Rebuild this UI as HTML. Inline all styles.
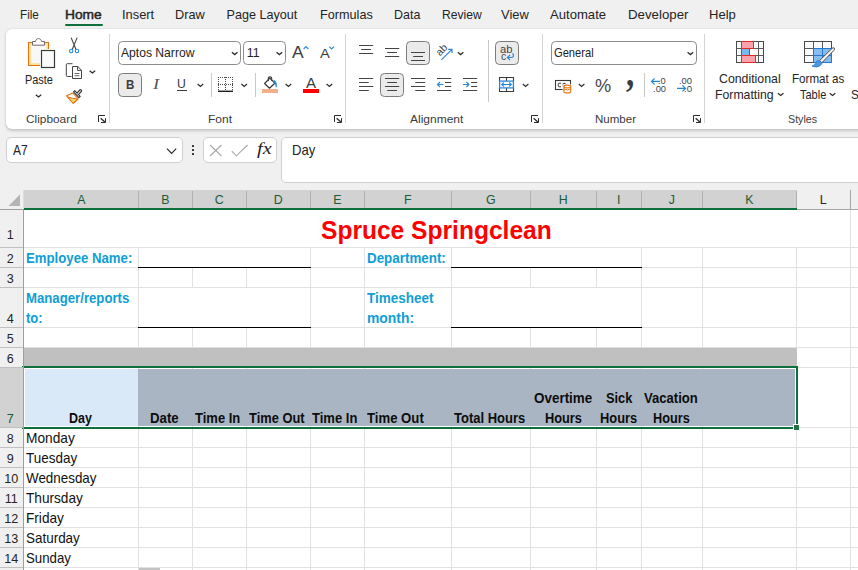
<!DOCTYPE html>
<html lang="en">
<head>
<meta charset="utf-8">
<title>Spruce Springclean - Excel</title>
<style>
*{box-sizing:border-box;margin:0;padding:0}
html,body{width:858px;height:570px;overflow:hidden;background:#f0f0f0}
body{position:relative;font-family:"Liberation Sans",sans-serif;color:#242424;font-size:13px}
.abs,.t{position:absolute;white-space:nowrap}
.t{line-height:1}
svg{position:absolute;overflow:visible}
</style>
</head>
<body>
<!-- ================= TABS ================= -->
<span class="t" style="left:19.90px;top:9.00px;font-size:12.6px;transform:scaleX(0.9267);transform-origin:0 0;">File</span>
<span class="t" style="left:64.90px;top:9.00px;font-size:12.6px;transform:scaleX(1.0939);transform-origin:0 0;-webkit-text-stroke:0.45px #242424;">Home</span>
<span class="t" style="left:121.50px;top:9.00px;font-size:12.6px;transform:scaleX(1.0222);transform-origin:0 0;">Insert</span>
<span class="t" style="left:174.90px;top:9.00px;font-size:12.6px;transform:scaleX(1.0129);transform-origin:0 0;">Draw</span>
<span class="t" style="left:226.50px;top:9.00px;font-size:12.6px;">Page Layout</span>
<span class="t" style="left:319.90px;top:9.00px;font-size:12.6px;transform:scaleX(1.0049);transform-origin:0 0;">Formulas</span>
<span class="t" style="left:393.90px;top:9.00px;font-size:12.6px;transform:scaleX(0.9907);transform-origin:0 0;">Data</span>
<span class="t" style="left:441.90px;top:9.00px;font-size:12.6px;transform:scaleX(0.9630);transform-origin:0 0;">Review</span>
<span class="t" style="left:501.20px;top:9.00px;font-size:12.6px;transform:scaleX(1.0262);transform-origin:0 0;">View</span>
<span class="t" style="left:550.20px;top:9.00px;font-size:12.6px;transform:scaleX(1.0403);transform-origin:0 0;">Automate</span>
<span class="t" style="left:628.20px;top:9.00px;font-size:12.6px;transform:scaleX(1.0530);transform-origin:0 0;">Developer</span>
<span class="t" style="left:708.50px;top:9.00px;font-size:12.6px;transform:scaleX(1.0350);transform-origin:0 0;">Help</span>
<div class="abs" style="left:65px;top:24px;width:38px;height:2px;background:#0f703b;border-radius:1px;"></div>
<!-- ================= RIBBON ================= -->
<div class="abs" style="left:6px;top:29px;width:880px;height:100px;background:#fff;border-radius:6px;box-shadow:0 1.5px 3px rgba(0,0,0,.17),0 0 1.5px rgba(0,0,0,.10);"></div>
<div class="abs" style="left:109px;top:34px;width:1px;height:89px;background:#d4d4d4;"></div>
<div class="abs" style="left:345px;top:34px;width:1px;height:89px;background:#d4d4d4;"></div>
<div class="abs" style="left:542px;top:34px;width:1px;height:89px;background:#d4d4d4;"></div>
<div class="abs" style="left:704px;top:34px;width:1px;height:89px;background:#d4d4d4;"></div>
<div class="abs" style="left:211px;top:73px;width:1px;height:24px;background:#c9c9c9;"></div>
<div class="abs" style="left:255px;top:73px;width:1px;height:24px;background:#c9c9c9;"></div>
<div class="abs" style="left:488px;top:40px;width:1px;height:62px;background:#c9c9c9;"></div>
<div class="abs" style="left:644px;top:73px;width:1px;height:24px;background:#c9c9c9;"></div>
<span class="t" style="left:25.80px;top:114.00px;font-size:11.2px;color:#3b3b3b;transform:scaleX(1.0597);transform-origin:0 0;">Clipboard</span>
<span class="t" style="left:207.70px;top:114.00px;font-size:11.2px;color:#3b3b3b;transform:scaleX(1.0714);transform-origin:0 0;">Font</span>
<span class="t" style="left:409.50px;top:114.00px;font-size:11.2px;color:#3b3b3b;transform:scaleX(1.0726);transform-origin:0 0;">Alignment</span>
<span class="t" style="left:595.00px;top:114.00px;font-size:11.2px;color:#3b3b3b;transform:scaleX(1.0297);transform-origin:0 0;">Number</span>
<span class="t" style="left:788.40px;top:114.00px;font-size:11.2px;color:#3b3b3b;transform:scaleX(0.9567);transform-origin:0 0;">Styles</span>
<svg style="left:0;top:0" width="858" height="140"><path d="M98.5 122V115.5H105" fill="none" stroke="#2a2a2a" stroke-width="1"/><path d="M100.6 118.3L105.2 122.2" fill="none" stroke="#2a2a2a" stroke-width="1.3"/><path d="M105.5 118.2V122.5H101" fill="none" stroke="#2a2a2a" stroke-width="1"/></svg>
<svg style="left:0;top:0" width="858" height="140"><path d="M334.5 122V115.5H341" fill="none" stroke="#2a2a2a" stroke-width="1"/><path d="M336.6 118.3L341.2 122.2" fill="none" stroke="#2a2a2a" stroke-width="1.3"/><path d="M341.5 118.2V122.5H337" fill="none" stroke="#2a2a2a" stroke-width="1"/></svg>
<svg style="left:0;top:0" width="858" height="140"><path d="M531.5 122V115.5H538" fill="none" stroke="#2a2a2a" stroke-width="1"/><path d="M533.6 118.3L538.2 122.2" fill="none" stroke="#2a2a2a" stroke-width="1.3"/><path d="M538.5 118.2V122.5H534" fill="none" stroke="#2a2a2a" stroke-width="1"/></svg>
<svg style="left:0;top:0" width="858" height="140"><path d="M693.5 122V115.5H700" fill="none" stroke="#2a2a2a" stroke-width="1"/><path d="M695.6 118.3L700.2 122.2" fill="none" stroke="#2a2a2a" stroke-width="1.3"/><path d="M700.5 118.2V122.5H696" fill="none" stroke="#2a2a2a" stroke-width="1"/></svg>
<svg style="left:0;top:0" width="858" height="140"><rect x="28.5" y="42.5" width="20" height="23" fill="#fbe19a" stroke="#e2730f" stroke-width="1"/><rect x="31.3" y="44.8" width="15" height="18.4" fill="#f8f8f8"/><path d="M32.5 45.2V41.5H35.4C35.8 39.7 37 38.6 38.5 38.6C40 38.6 41.2 39.7 41.6 41.5H44.5V45.2Z" fill="#fff" stroke="#6a6a6a" stroke-width="1"/><rect x="40" y="49" width="16" height="20" fill="#fff"/><rect x="41.5" y="50.5" width="13" height="17" fill="#fafafa" stroke="#3a3a3a" stroke-width="1.2"/></svg>
<span class="t" style="left:25.10px;top:74.00px;font-size:12.4px;transform:scaleX(0.8806);transform-origin:0 0;">Paste</span>
<svg style="left:0;top:0" width="858" height="140"><path d="M35.8 94.7L38.5 96.9L41.2 94.7" fill="none" stroke="#2b2b2b" stroke-width="1.25" stroke-linejoin="miter"/></svg>
<svg style="left:0;top:0" width="858" height="140"><path d="M71.1 37.6L76.1 49.7M77.1 37.6L72.1 49.7" fill="none" stroke="#444" stroke-width="1.1"/><circle cx="71.2" cy="51" r="1.7" fill="#fff" stroke="#2b88d8" stroke-width="1.1"/><circle cx="77" cy="51" r="1.7" fill="#fff" stroke="#2b88d8" stroke-width="1.1"/></svg>
<svg style="left:0;top:0" width="858" height="140"><path d="M71.5 76.5H67.3Q66.3 76.5 66.3 75.5V64.7Q66.3 63.7 67.3 63.7H72.5" fill="none" stroke="#444" stroke-width="1"/><path d="M72.5 66.5H77.8L81.5 70.2V78.5H72.5Z" fill="#fff" stroke="#444" stroke-width="1"/><path d="M77.6 66.7V70.4H81.3" fill="none" stroke="#444" stroke-width="1"/><path d="M74.6 73.5H79.4M74.6 75.7H79.4" fill="none" stroke="#555" stroke-width="0.9"/></svg>
<svg style="left:0;top:0" width="858" height="140"><path d="M89.6 70.7L92.4 73.0L95.2 70.7" fill="none" stroke="#2b2b2b" stroke-width="1.25" stroke-linejoin="miter"/></svg>
<svg style="left:0;top:0" width="858" height="140"><path d="M72.8 93L66.6 95.8L73.2 103.5L78.2 98.8Z" fill="#fff" stroke="#e2730f" stroke-width="1.1" stroke-linejoin="round"/><path d="M67.6 96.8Q72.6 98.8 77.6 98.9L73.2 103.2Z" fill="#fbd56e" stroke="#e2730f" stroke-width="1" stroke-linejoin="round"/><path d="M73.5 91.9L74.7 90.7L80.2 96.4L79 97.6Z" fill="#fff" stroke="#333" stroke-width="1.1" stroke-linejoin="round"/><path d="M76.9 93.1L79.8 90Q80.5 89.3 81.3 90Q82 90.8 81.3 91.5L78.4 94.6" fill="#fff" stroke="#333" stroke-width="1.1" stroke-linejoin="round"/></svg>
<div class="abs" style="left:118px;top:41px;width:123px;height:24px;background:#fff;border:1px solid #8c8c8c;border-radius:4.5px;"></div>
<span class="t" style="left:120.50px;top:47.00px;font-size:12.4px;transform:scaleX(0.9781);transform-origin:0 0;">Aptos Narrow</span>
<svg style="left:0;top:0" width="858" height="140"><path d="M231.9 52.3L234.7 54.6L237.5 52.3" fill="none" stroke="#2b2b2b" stroke-width="1.25" stroke-linejoin="miter"/></svg>
<div class="abs" style="left:243px;top:41px;width:43px;height:24px;background:#fff;border:1px solid #8c8c8c;border-radius:4.5px;"></div>
<span class="t" style="left:246.70px;top:47.00px;font-size:12.4px;">11</span>
<svg style="left:0;top:0" width="858" height="140"><path d="M276.6 52.3L279.4 54.6L282.2 52.3" fill="none" stroke="#2b2b2b" stroke-width="1.25" stroke-linejoin="miter"/></svg>
<span class="t" style="left:292.40px;top:45.00px;font-size:16px;color:#3b3b3b;transform:scaleX(1.0914);transform-origin:0 0;">A</span>
<svg style="left:0;top:0" width="858" height="140"><path d="M303.6 49.0L306.0 46.6L308.4 49.0" fill="none" stroke="#2b88d8" stroke-width="1.2" stroke-linejoin="miter"/></svg>
<span class="t" style="left:320.00px;top:48.00px;font-size:12.6px;color:#3b3b3b;transform:scaleX(1.1727);transform-origin:0 0;">A</span>
<svg style="left:0;top:0" width="858" height="140"><path d="M329.3 46.6L331.6 49.0L334.0 46.6" fill="none" stroke="#2b88d8" stroke-width="1.2" stroke-linejoin="miter"/></svg>
<div class="abs" style="left:118px;top:73px;width:24px;height:24px;background:#ebebeb;border:1px solid #7c7c7c;border-radius:4.5px;"></div>
<span class="t" style="left:125.60px;top:78.00px;font-size:13px;font-weight:700;color:#3b3b3b;transform:scaleX(0.8868);transform-origin:0 0;">B</span>
<span class="t" style="left:152.69px;top:78.00px;font-size:14px;font-style:italic;color:#555;transform:scaleX(1.3158);transform-origin:0 0;font-family:'Liberation Serif',serif;">I</span>
<span class="t" style="left:176.80px;top:78.00px;font-size:12.6px;color:#3b3b3b;transform:scaleX(0.9700);transform-origin:0 0;">U</span>
<div class="abs" style="left:177px;top:89.6px;width:9.5px;height:1px;background:#3b3b3b;"></div>
<svg style="left:0;top:0" width="858" height="140"><path d="M197.6 84.1L200.4 86.4L203.2 84.1" fill="none" stroke="#2b2b2b" stroke-width="1.25" stroke-linejoin="miter"/></svg>
<svg style="left:0;top:0" width="858" height="140"><path d="M218 77h1v1h-1zM220 77h1v1h-1zM222 77h1v1h-1zM224 77h1v1h-1zM226 77h1v1h-1zM228 77h1v1h-1zM230 77h1v1h-1zM232 77h1v1h-1zM218 84h1v1h-1zM220 84h1v1h-1zM222 84h1v1h-1zM224 84h1v1h-1zM226 84h1v1h-1zM228 84h1v1h-1zM230 84h1v1h-1zM232 84h1v1h-1zM218 77h1v1h-1zM218 79h1v1h-1zM218 81h1v1h-1zM218 83h1v1h-1zM218 85h1v1h-1zM218 87h1v1h-1zM218 89h1v1h-1zM225 77h1v1h-1zM225 79h1v1h-1zM225 81h1v1h-1zM225 83h1v1h-1zM225 85h1v1h-1zM225 87h1v1h-1zM225 89h1v1h-1zM232 77h1v1h-1zM232 79h1v1h-1zM232 81h1v1h-1zM232 83h1v1h-1zM232 85h1v1h-1zM232 87h1v1h-1zM232 89h1v1h-1z" fill="#4a4a4a" shape-rendering="crispEdges"/><rect x="218" y="90.6" width="15" height="1.4" fill="#1f1f1f"/></svg>
<svg style="left:0;top:0" width="858" height="140"><path d="M241.4 84.1L244.2 86.4L247.0 84.1" fill="none" stroke="#2b2b2b" stroke-width="1.25" stroke-linejoin="miter"/></svg>
<svg style="left:0;top:0" width="858" height="140"><path d="M264.6 83.5L269.8 78.2L274.8 83.2L269.5 88.2Z" fill="#fff" stroke="#3a3a3a" stroke-width="1.2" stroke-linejoin="round"/><path d="M268.3 81.2V78.5Q268.3 76.9 270 76.9Q271.7 76.9 271.7 78.5V80.8" fill="none" stroke="#3a3a3a" stroke-width="1.1"/><path d="M273.8 80.3Q277.6 82 276.2 87.2Q275.8 83.8 273.4 81.8Z" fill="#2b88d8" stroke="#2b88d8" stroke-width="0.6"/><rect x="262" y="89" width="16" height="4" fill="#f2b08a"/></svg>
<svg style="left:0;top:0" width="858" height="140"><path d="M285.6 84.1L288.4 86.4L291.2 84.1" fill="none" stroke="#2b2b2b" stroke-width="1.25" stroke-linejoin="miter"/></svg>
<span class="t" style="left:305.90px;top:75.00px;font-size:15.2px;color:#3b3b3b;transform:scaleX(0.9918);transform-origin:0 0;">A</span>
<div class="abs" style="left:303px;top:89px;width:16px;height:4px;background:#ff0000;"></div>
<svg style="left:0;top:0" width="858" height="140"><path d="M326.6 84.1L329.4 86.4L332.2 84.1" fill="none" stroke="#2b2b2b" stroke-width="1.25" stroke-linejoin="miter"/></svg>
<svg style="left:0;top:0" width="858" height="140"><path d="M359.0 45.5H373.2M361.2 49.5H371.0M359.0 53.5H373.2" fill="none" stroke="#444" stroke-width="1.1"/></svg>
<svg style="left:0;top:0" width="858" height="140"><path d="M385.0 48.5H399.2M387.2 52.5H397.0M385.0 56.5H399.2" fill="none" stroke="#444" stroke-width="1.1"/></svg>
<div class="abs" style="left:406px;top:41px;width:24px;height:24px;background:#ebebeb;border:1px solid #7c7c7c;border-radius:4.5px;"></div>
<svg style="left:0;top:0" width="858" height="140"><path d="M411.0 52.5H425.0M413.2 56.5H423.0M411.0 60.5H425.0" fill="none" stroke="#444" stroke-width="1.1"/></svg>
<span class="t" style="left:440.6px;top:47.2px;font-size:10.5px;color:#444;transform:rotate(-45deg);transform-origin:0 100%;">ab</span>
<svg style="left:0;top:0" width="858" height="140"><path d="M441.4 59.8L451.6 49.6M448.2 49.3H452V53.1" fill="none" stroke="#2b88d8" stroke-width="1.2"/></svg>
<svg style="left:0;top:0" width="858" height="140"><path d="M457.8 52.3L460.6 54.6L463.4 52.3" fill="none" stroke="#2b2b2b" stroke-width="1.25" stroke-linejoin="miter"/></svg>
<svg style="left:0;top:0" width="858" height="140"><path d="M359.0 78.5H373.2M359.0 82.5H368.8M359.0 86.5H373.2M359.0 90.5H368.8" fill="none" stroke="#444" stroke-width="1.1"/></svg>
<div class="abs" style="left:380px;top:73px;width:24px;height:24px;background:#ebebeb;border:1px solid #7c7c7c;border-radius:4.5px;"></div>
<svg style="left:0;top:0" width="858" height="140"><path d="M385.0 78.5H399.2M387.2 82.5H397.0M385.0 86.5H399.2M387.2 90.5H397.0" fill="none" stroke="#444" stroke-width="1.1"/></svg>
<svg style="left:0;top:0" width="858" height="140"><path d="M411.0 78.5H425.2M415.3 82.5H425.2M411.0 86.5H425.2M415.3 90.5H425.2" fill="none" stroke="#444" stroke-width="1.1"/></svg>
<svg style="left:0;top:0" width="858" height="140"><path d="M437.0 78.5H451.2M445.0 82.5H451.2M445.0 86.5H451.2M437.0 90.5H451.2" fill="none" stroke="#444" stroke-width="1.1"/></svg>
<svg style="left:0;top:0" width="858" height="140"><path d="M437.6 84.5H443.4M440 82L437.5 84.5L440 87" fill="none" stroke="#2b88d8" stroke-width="1.2"/></svg>
<svg style="left:0;top:0" width="858" height="140"><path d="M463.0 78.5H477.2M471.0 82.5H477.2M471.0 86.5H477.2M463.0 90.5H477.2" fill="none" stroke="#444" stroke-width="1.1"/></svg>
<svg style="left:0;top:0" width="858" height="140"><path d="M463 84.5H468.8M466.4 82L468.9 84.5L466.4 87" fill="none" stroke="#2b88d8" stroke-width="1.2"/></svg>
<div class="abs" style="left:495px;top:41px;width:24px;height:24px;background:#ebebeb;border:1px solid #7c7c7c;border-radius:4.5px;"></div>
<span class="t" style="left:500.40px;top:45.00px;font-size:10.2px;color:#444;transform:scaleX(1.0952);transform-origin:0 0;">ab</span>
<span class="t" style="left:500.60px;top:52.00px;font-size:10.2px;color:#444;transform:scaleX(1.0196);transform-origin:0 0;">c</span>
<svg style="left:0;top:0" width="858" height="140"><path d="M512.6 53.2Q515 57.6 510.6 57.5H507.6M510 55L507.4 57.5L510 60" fill="none" stroke="#2b88d8" stroke-width="1.2"/></svg>
<svg style="left:0;top:0" width="858" height="140"><path d="M499.5 81V77.5H513.5V81M506.5 77.5V81M499.5 88V91.5H513.5V88M506.5 88V91.5" fill="none" stroke="#3a3a3a" stroke-width="1.1"/><rect x="499.6" y="81.1" width="13.8" height="6.8" fill="#fff" stroke="#2b88d8" stroke-width="1.3"/><path d="M501.8 84.5H511.2M503.8 82.5L501.7 84.5L503.8 86.5M509.2 82.5L511.3 84.5L509.2 86.5" fill="none" stroke="#2b88d8" stroke-width="1.1"/></svg>
<svg style="left:0;top:0" width="858" height="140"><path d="M522.8 84.1L525.6 86.4L528.4 84.1" fill="none" stroke="#2b2b2b" stroke-width="1.25" stroke-linejoin="miter"/></svg>
<div class="abs" style="left:551px;top:41px;width:146px;height:24px;background:#fff;border:1px solid #8c8c8c;border-radius:4.5px;"></div>
<span class="t" style="left:554.00px;top:47.00px;font-size:12.4px;transform:scaleX(0.8993);transform-origin:0 0;">General</span>
<svg style="left:0;top:0" width="858" height="140"><path d="M687.6 52.3L690.4 54.6L693.2 52.3" fill="none" stroke="#2b2b2b" stroke-width="1.25" stroke-linejoin="miter"/></svg>
<svg style="left:0;top:0" width="858" height="140"><rect x="555.5" y="80.5" width="15" height="9" fill="#fff" stroke="#3a3a3a" stroke-width="1.1"/><path d="M561 83.2Q558 82.4 558 85Q558 87.6 561 86.8M563.2 87V83.4Q565.6 82.6 565.8 84.6" fill="none" stroke="#3a3a3a" stroke-width="1"/><rect x="562.6" y="84.4" width="9.4" height="9.4" fill="#fff"/><path d="M563.9 86.5V91.4Q563.9 92.9 567.3 92.9Q570.7 92.9 570.7 91.4V86.5" fill="#fff" stroke="#e2730f" stroke-width="1.1"/><ellipse cx="567.3" cy="86.5" rx="3.4" ry="1.4" fill="#fff" stroke="#e2730f" stroke-width="1.1"/><path d="M563.9 89Q567.3 90.8 570.7 89" fill="none" stroke="#e2730f" stroke-width="1"/></svg>
<svg style="left:0;top:0" width="858" height="140"><path d="M578.8 84.1L581.6 86.4L584.4 84.1" fill="none" stroke="#2b2b2b" stroke-width="1.25" stroke-linejoin="miter"/></svg>
<span class="t" style="left:595.40px;top:78.00px;font-size:17.8px;color:#484848;transform:scaleX(1.0226);transform-origin:0 0;">%</span>
<span class="t" style="left:626.00px;top:53.00px;font-size:40px;font-weight:700;color:#3b3b3b;transform:scaleX(0.8200);transform-origin:0 0;font-family:'Liberation Serif',serif;">,</span>
<svg style="left:0;top:0" width="858" height="140"><path d="M651.6 81.4H660M654.6 78.4L651.5 81.4L654.6 84.4" fill="none" stroke="#2287d6" stroke-width="1.25"/></svg>
<span class="t" style="left:658.20px;top:77.00px;font-size:9.3px;color:#444;transform:scaleX(1.0044);transform-origin:0 0;">.0</span>
<span class="t" style="left:653.10px;top:85.00px;font-size:9.3px;color:#444;">.00</span>
<span class="t" style="left:679.10px;top:77.00px;font-size:9.3px;color:#444;transform:scaleX(1.0056);transform-origin:0 0;">.00</span>
<svg style="left:0;top:0" width="858" height="140"><path d="M677 88.4H685.4M682.4 85.4L685.5 88.4L682.4 91.4" fill="none" stroke="#2287d6" stroke-width="1.25"/></svg>
<span class="t" style="left:684.00px;top:85.00px;font-size:9.3px;color:#444;transform:scaleX(1.0431);transform-origin:0 0;">.0</span>
<svg style="left:0;top:0" width="858" height="140"><rect x="736.5" y="41.5" width="27" height="21" fill="#fafafa" stroke="#4a4a4a" stroke-width="1"/><path d="M736.5 48.5H763.5M736.5 55.5H763.5M758.5 41.5V62.5" fill="none" stroke="#5a5a5a" stroke-width="1"/><rect x="741.5" y="41.5" width="12" height="7" fill="#f8a3ab" stroke="#e02b2b" stroke-width="1"/><rect x="742" y="49" width="7" height="6" fill="#7ab7ea"/><path d="M749.5 48.5V55.5" fill="none" stroke="#1a6fc4" stroke-width="1"/><rect x="741.5" y="55.5" width="14" height="7" fill="#f8a3ab" stroke="#e02b2b" stroke-width="1"/><path d="M741.5 41.5V62.5" fill="none" stroke="#e02b2b" stroke-width="1"/></svg>
<span class="t" style="left:718.80px;top:73.00px;font-size:12.4px;transform:scaleX(0.9942);transform-origin:0 0;">Conditional</span>
<span class="t" style="left:714.80px;top:89.00px;font-size:12.4px;transform:scaleX(0.9887);transform-origin:0 0;">Formatting</span>
<svg style="left:0;top:0" width="858" height="140"><path d="M777.9 93.2L780.7 95.5L783.5 93.2" fill="none" stroke="#2b2b2b" stroke-width="1.25" stroke-linejoin="miter"/></svg>
<svg style="left:0;top:0" width="858" height="140"><rect x="804.5" y="41.5" width="27" height="21" fill="#fafafa" stroke="#4a4a4a" stroke-width="1"/><rect x="813.5" y="48.5" width="18.5" height="14.5" fill="#86bcee"/><path d="M804.5 48.5H813.5M804.5 55.5H813.5M813.5 41.5V48.5M822.5 41.5V48.5M813.5 48.5H831.5" fill="none" stroke="#5a5a5a" stroke-width="1"/><path d="M813.5 48.5V62.5M822.5 48.5V62.5M813.5 55.5H831.5M813.5 48.5H831.5M831.5 48.5V62.5M813.5 62.5H831.5" fill="none" stroke="#2477d0" stroke-width="1"/><path d="M819.6 60.6L832 48.4Q833.4 47.2 834.3 48.1Q835.1 49.1 833.9 50.4L821.8 62.8Z" fill="#f4f4f4" stroke="#4a4a4a" stroke-width="1"/><path d="M819.4 60.4Q816.2 60.4 815.4 63.4Q814.6 65.6 812 66Q816.6 68.2 820 65.8Q822.2 64 822 62.8Z" fill="#4c97e0" stroke="#2477d0" stroke-width="0.8"/></svg>
<span class="t" style="left:791.80px;top:73.00px;font-size:12.4px;transform:scaleX(0.9355);transform-origin:0 0;">Format as</span>
<span class="t" style="left:799.70px;top:89.00px;font-size:12.4px;transform:scaleX(0.8874);transform-origin:0 0;">Table</span>
<svg style="left:0;top:0" width="858" height="140"><path d="M829.7 93.2L832.5 95.5L835.3 93.2" fill="none" stroke="#2b2b2b" stroke-width="1.25" stroke-linejoin="miter"/></svg>
<span class="t" style="left:850.60px;top:89.00px;font-size:12.4px;transform:scaleX(0.9441);transform-origin:0 0;">Styles</span>
<!-- ================= FORMULA BAR ================= -->
<div class="abs" style="left:6px;top:137px;width:177px;height:26px;background:#fff;border:1px solid #cfcfcf;border-radius:5px;"></div>
<span class="t" style="left:12.80px;top:143.00px;font-size:14.2px;transform:scaleX(0.8508);transform-origin:0 0;">A7</span>
<svg style="left:166px;top:147px" width="12" height="8"><path d="M1 1.6L5.6 6.3L10.2 1.6" fill="none" stroke="#2b2b2b" stroke-width="1.2"/></svg>
<div class="abs" style="left:192px;top:144.6px;width:2.4px;height:2.4px;background:#2a2a2a;border-radius:0.6px;"></div>
<div class="abs" style="left:192px;top:148.5px;width:2.4px;height:2.4px;background:#2a2a2a;border-radius:0.6px;"></div>
<div class="abs" style="left:192px;top:152.5px;width:2.4px;height:2.4px;background:#2a2a2a;border-radius:0.6px;"></div>
<div class="abs" style="left:203px;top:137px;width:74px;height:26px;background:#fff;border:1px solid #cfcfcf;border-radius:5px;"></div>
<svg style="left:209px;top:144px" width="40" height="13"><path d="M1 1L12.4 12M12.4 1L1 12" fill="none" stroke="#a8a8a8" stroke-width="1.1"/><path d="M22.8 7.2L27.3 11.8L38.6 1" fill="none" stroke="#a8a8a8" stroke-width="1.1"/></svg>
<span class="t" style="left:256.60px;top:140.00px;font-size:17px;font-style:italic;color:#222;transform:scaleX(1.1928);transform-origin:0 0;font-family:'Liberation Serif',serif;">fx</span>
<div class="abs" style="left:281px;top:137px;width:600px;height:46px;background:#fff;border:1px solid #cfcfcf;border-radius:5px;"></div>
<span class="t" style="left:291.80px;top:143.00px;font-size:14.2px;transform:scaleX(0.9258);transform-origin:0 0;">Day</span>
<!-- ================= GRID ================= -->
<div class="abs" style="left:24px;top:210px;width:834px;height:360px;background:#fff;"></div>
<div class="abs" style="left:24px;top:247px;width:834px;height:1px;background:#e1e1e1;"></div>
<div class="abs" style="left:24px;top:267px;width:834px;height:1px;background:#e1e1e1;"></div>
<div class="abs" style="left:24px;top:287px;width:834px;height:1px;background:#e1e1e1;"></div>
<div class="abs" style="left:24px;top:327px;width:834px;height:1px;background:#e1e1e1;"></div>
<div class="abs" style="left:24px;top:347px;width:834px;height:1px;background:#e1e1e1;"></div>
<div class="abs" style="left:24px;top:367px;width:834px;height:1px;background:#e1e1e1;"></div>
<div class="abs" style="left:24px;top:427px;width:834px;height:1px;background:#e1e1e1;"></div>
<div class="abs" style="left:24px;top:447px;width:834px;height:1px;background:#e1e1e1;"></div>
<div class="abs" style="left:24px;top:467px;width:834px;height:1px;background:#e1e1e1;"></div>
<div class="abs" style="left:24px;top:487px;width:834px;height:1px;background:#e1e1e1;"></div>
<div class="abs" style="left:24px;top:507px;width:834px;height:1px;background:#e1e1e1;"></div>
<div class="abs" style="left:24px;top:527px;width:834px;height:1px;background:#e1e1e1;"></div>
<div class="abs" style="left:24px;top:547px;width:834px;height:1px;background:#e1e1e1;"></div>
<div class="abs" style="left:24px;top:567px;width:834px;height:1px;background:#e1e1e1;"></div>
<div class="abs" style="left:138px;top:210px;width:1px;height:360px;background:#e1e1e1;"></div>
<div class="abs" style="left:192px;top:210px;width:1px;height:360px;background:#e1e1e1;"></div>
<div class="abs" style="left:246px;top:210px;width:1px;height:360px;background:#e1e1e1;"></div>
<div class="abs" style="left:310px;top:210px;width:1px;height:360px;background:#e1e1e1;"></div>
<div class="abs" style="left:364px;top:210px;width:1px;height:360px;background:#e1e1e1;"></div>
<div class="abs" style="left:451px;top:210px;width:1px;height:360px;background:#e1e1e1;"></div>
<div class="abs" style="left:530px;top:210px;width:1px;height:360px;background:#e1e1e1;"></div>
<div class="abs" style="left:596px;top:210px;width:1px;height:360px;background:#e1e1e1;"></div>
<div class="abs" style="left:641px;top:210px;width:1px;height:360px;background:#e1e1e1;"></div>
<div class="abs" style="left:702px;top:210px;width:1px;height:360px;background:#e1e1e1;"></div>
<div class="abs" style="left:796px;top:210px;width:1px;height:360px;background:#e1e1e1;"></div>
<div class="abs" style="left:850px;top:210px;width:1px;height:360px;background:#e1e1e1;"></div>
<div class="abs" style="left:24px;top:210px;width:773px;height:37px;background:#fff;"></div>
<div class="abs" style="left:139px;top:248px;width:171px;height:19px;background:#fff;"></div>
<div class="abs" style="left:139px;top:288px;width:171px;height:39px;background:#fff;"></div>
<div class="abs" style="left:452px;top:248px;width:189px;height:19px;background:#fff;"></div>
<div class="abs" style="left:452px;top:288px;width:189px;height:39px;background:#fff;"></div>
<div class="abs" style="left:138px;top:267px;width:173px;height:1px;background:#000;"></div>
<div class="abs" style="left:451px;top:267px;width:191px;height:1px;background:#000;"></div>
<div class="abs" style="left:138px;top:327px;width:173px;height:1px;background:#000;"></div>
<div class="abs" style="left:451px;top:327px;width:191px;height:1px;background:#000;"></div>
<div class="abs" style="left:24px;top:348px;width:773px;height:18px;background:#c0c0c0;"></div>
<div class="abs" style="left:25px;top:369px;width:113px;height:57px;background:#dae9f8;"></div>
<div class="abs" style="left:138px;top:369px;width:657px;height:57px;background:#a9b5c3;"></div>
<div class="abs" style="left:22px;top:366px;width:776px;height:2px;background:#0f703b;"></div>
<div class="abs" style="left:22px;top:366px;width:2px;height:63px;background:#0f703b;"></div>
<div class="abs" style="left:22px;top:427px;width:771px;height:2px;background:#0f703b;"></div>
<div class="abs" style="left:796px;top:366px;width:2px;height:58px;background:#0f703b;"></div>
<div class="abs" style="left:793px;top:424px;width:6px;height:6px;background:#fff;"></div>
<div class="abs" style="left:794px;top:425px;width:5px;height:5px;background:#217346;"></div>
<div class="abs" style="left:139px;top:568px;width:21px;height:2px;background:#c3c3c3;"></div>
<div class="abs" style="left:0px;top:190px;width:858px;height:20px;background:#f0f0f0;"></div>
<div class="abs" style="left:24px;top:190px;width:773px;height:18px;background:#d2d2d2;"></div>
<div class="abs" style="left:138px;top:191px;width:1px;height:17px;background:#b1b1b1;"></div>
<span class="t" style="left:77.15px;top:194.00px;font-size:12.4px;color:#185c37;">A</span>
<div class="abs" style="left:192px;top:191px;width:1px;height:17px;background:#b1b1b1;"></div>
<span class="t" style="left:161.18px;top:194.00px;font-size:12.4px;color:#185c37;">B</span>
<div class="abs" style="left:246px;top:191px;width:1px;height:17px;background:#b1b1b1;"></div>
<span class="t" style="left:214.84px;top:194.00px;font-size:12.4px;color:#185c37;">C</span>
<div class="abs" style="left:310px;top:191px;width:1px;height:17px;background:#b1b1b1;"></div>
<span class="t" style="left:273.84px;top:194.00px;font-size:12.4px;color:#185c37;">D</span>
<div class="abs" style="left:364px;top:191px;width:1px;height:17px;background:#b1b1b1;"></div>
<span class="t" style="left:333.18px;top:194.00px;font-size:12.4px;color:#185c37;">E</span>
<div class="abs" style="left:451px;top:191px;width:1px;height:17px;background:#b1b1b1;"></div>
<span class="t" style="left:404.02px;top:194.00px;font-size:12.4px;color:#185c37;">F</span>
<div class="abs" style="left:530px;top:191px;width:1px;height:17px;background:#b1b1b1;"></div>
<span class="t" style="left:485.96px;top:194.00px;font-size:12.4px;color:#185c37;">G</span>
<div class="abs" style="left:596px;top:191px;width:1px;height:17px;background:#b1b1b1;"></div>
<span class="t" style="left:558.84px;top:194.00px;font-size:12.4px;color:#185c37;">H</span>
<div class="abs" style="left:641px;top:191px;width:1px;height:17px;background:#b1b1b1;"></div>
<span class="t" style="left:617.06px;top:194.00px;font-size:12.4px;color:#185c37;">I</span>
<div class="abs" style="left:702px;top:191px;width:1px;height:17px;background:#b1b1b1;"></div>
<span class="t" style="left:668.70px;top:194.00px;font-size:12.4px;color:#185c37;">J</span>
<div class="abs" style="left:796px;top:191px;width:1px;height:17px;background:#b1b1b1;"></div>
<span class="t" style="left:745.18px;top:194.00px;font-size:12.4px;color:#185c37;">K</span>
<div class="abs" style="left:850px;top:190px;width:1px;height:20px;background:#a6a6a6;"></div>
<span class="t" style="left:819.86px;top:194.00px;font-size:12.4px;">L</span>
<div class="abs" style="left:24px;top:208px;width:773px;height:2px;background:#0f703b;"></div>
<div class="abs" style="left:797px;top:209px;width:61px;height:1px;background:#a6a6a6;"></div>
<div class="abs" style="left:23px;top:190px;width:1px;height:19px;background:#dedede;"></div>
<div class="abs" style="left:23px;top:209px;width:1px;height:361px;background:#9f9f9f;"></div>
<div class="abs" style="left:0px;top:209px;width:23px;height:1px;background:#9f9f9f;"></div>
<svg style="left:0;top:190px" width="24" height="20"><path d="M20 4.5V16H8.5z" fill="#b4b4b4"/></svg>
<div class="abs" style="left:0px;top:368px;width:23px;height:59px;background:#d2d2d2;"></div>
<div class="abs" style="left:0px;top:247px;width:23px;height:1px;background:#c0c0c0;"></div>
<div class="abs" style="left:0px;top:267px;width:23px;height:1px;background:#c0c0c0;"></div>
<div class="abs" style="left:0px;top:287px;width:23px;height:1px;background:#c0c0c0;"></div>
<div class="abs" style="left:0px;top:327px;width:23px;height:1px;background:#c0c0c0;"></div>
<div class="abs" style="left:0px;top:347px;width:23px;height:1px;background:#c0c0c0;"></div>
<div class="abs" style="left:0px;top:367px;width:23px;height:1px;background:#c0c0c0;"></div>
<div class="abs" style="left:0px;top:427px;width:23px;height:1px;background:#c0c0c0;"></div>
<div class="abs" style="left:0px;top:447px;width:23px;height:1px;background:#c0c0c0;"></div>
<div class="abs" style="left:0px;top:467px;width:23px;height:1px;background:#c0c0c0;"></div>
<div class="abs" style="left:0px;top:487px;width:23px;height:1px;background:#c0c0c0;"></div>
<div class="abs" style="left:0px;top:507px;width:23px;height:1px;background:#c0c0c0;"></div>
<div class="abs" style="left:0px;top:527px;width:23px;height:1px;background:#c0c0c0;"></div>
<div class="abs" style="left:0px;top:547px;width:23px;height:1px;background:#c0c0c0;"></div>
<div class="abs" style="left:0px;top:567px;width:23px;height:1px;background:#c0c0c0;"></div>
<span class="t" style="left:6.70px;top:229.00px;font-size:12.6px;">1</span>
<span class="t" style="left:6.70px;top:253.00px;font-size:12.6px;">2</span>
<span class="t" style="left:6.70px;top:273.00px;font-size:12.6px;">3</span>
<span class="t" style="left:6.70px;top:313.00px;font-size:12.6px;">4</span>
<span class="t" style="left:6.70px;top:333.00px;font-size:12.6px;">5</span>
<span class="t" style="left:6.70px;top:353.00px;font-size:12.6px;">6</span>
<span class="t" style="left:6.70px;top:413.00px;font-size:12.6px;color:#185c37;">7</span>
<span class="t" style="left:6.70px;top:433.00px;font-size:12.6px;">8</span>
<span class="t" style="left:6.70px;top:453.00px;font-size:12.6px;">9</span>
<span class="t" style="left:4.31px;top:473.00px;font-size:12.6px;">10</span>
<span class="t" style="left:4.75px;top:493.00px;font-size:12.6px;">11</span>
<span class="t" style="left:4.31px;top:513.00px;font-size:12.6px;">12</span>
<span class="t" style="left:4.31px;top:533.00px;font-size:12.6px;">13</span>
<span class="t" style="left:4.31px;top:553.00px;font-size:12.6px;">14</span>
<span class="t" style="left:321.10px;top:218.00px;font-size:25px;font-weight:700;color:#ff0000;transform:scaleX(0.9827);transform-origin:0 0;">Spruce Springclean</span>
<span class="t" style="left:26.00px;top:251.00px;font-size:14.2px;font-weight:700;color:#0f9ed5;transform:scaleX(0.9296);transform-origin:0 0;">Employee Name:</span>
<span class="t" style="left:367.40px;top:251.00px;font-size:14.2px;font-weight:700;color:#0f9ed5;transform:scaleX(0.9434);transform-origin:0 0;">Department:</span>
<span class="t" style="left:26.00px;top:291.00px;font-size:14.2px;font-weight:700;color:#0f9ed5;transform:scaleX(0.9294);transform-origin:0 0;">Manager/reports</span>
<span class="t" style="left:25.80px;top:311.00px;font-size:14.2px;font-weight:700;color:#0f9ed5;transform:scaleX(0.9169);transform-origin:0 0;">to:</span>
<span class="t" style="left:367.40px;top:291.00px;font-size:14.2px;font-weight:700;color:#0f9ed5;transform:scaleX(0.9513);transform-origin:0 0;">Timesheet</span>
<span class="t" style="left:367.40px;top:311.00px;font-size:14.2px;font-weight:700;color:#0f9ed5;transform:scaleX(0.9784);transform-origin:0 0;">month:</span>
<span class="t" style="left:68.90px;top:411.00px;font-size:14.2px;font-weight:700;color:#0d0d0d;transform:scaleX(0.8788);transform-origin:0 0;">Day</span>
<span class="t" style="left:150.10px;top:411.00px;font-size:14.2px;font-weight:700;color:#0d0d0d;transform:scaleX(0.9314);transform-origin:0 0;">Date</span>
<span class="t" style="left:194.70px;top:411.00px;font-size:14.2px;font-weight:700;color:#0d0d0d;transform:scaleX(0.9167);transform-origin:0 0;">Time In</span>
<span class="t" style="left:249.20px;top:411.00px;font-size:14.2px;font-weight:700;color:#0d0d0d;transform:scaleX(0.9074);transform-origin:0 0;">Time Out</span>
<span class="t" style="left:312.20px;top:411.00px;font-size:14.2px;font-weight:700;color:#0d0d0d;transform:scaleX(0.9187);transform-origin:0 0;">Time In</span>
<span class="t" style="left:366.50px;top:411.00px;font-size:14.2px;font-weight:700;color:#0d0d0d;transform:scaleX(0.9270);transform-origin:0 0;">Time Out</span>
<span class="t" style="left:453.70px;top:411.00px;font-size:14.2px;font-weight:700;color:#0d0d0d;transform:scaleX(0.9163);transform-origin:0 0;">Total Hours</span>
<span class="t" style="left:533.70px;top:391.00px;font-size:14.2px;font-weight:700;color:#0d0d0d;transform:scaleX(0.9471);transform-origin:0 0;">Overtime</span>
<span class="t" style="left:545.00px;top:411.00px;font-size:14.2px;font-weight:700;color:#0d0d0d;transform:scaleX(0.9016);transform-origin:0 0;">Hours</span>
<span class="t" style="left:605.60px;top:391.00px;font-size:14.2px;font-weight:700;color:#0d0d0d;transform:scaleX(0.9025);transform-origin:0 0;">Sick</span>
<span class="t" style="left:599.80px;top:411.00px;font-size:14.2px;font-weight:700;color:#0d0d0d;transform:scaleX(0.9065);transform-origin:0 0;">Hours</span>
<span class="t" style="left:644.20px;top:391.00px;font-size:14.2px;font-weight:700;color:#0d0d0d;transform:scaleX(0.9207);transform-origin:0 0;">Vacation</span>
<span class="t" style="left:653.20px;top:411.00px;font-size:14.2px;font-weight:700;color:#0d0d0d;transform:scaleX(0.8967);transform-origin:0 0;">Hours</span>
<span class="t" style="left:26.10px;top:431.00px;font-size:14.2px;color:#111;transform:scaleX(0.9673);transform-origin:0 0;">Monday</span>
<span class="t" style="left:26.10px;top:451.00px;font-size:14.2px;color:#111;transform:scaleX(0.9489);transform-origin:0 0;">Tuesday</span>
<span class="t" style="left:26.10px;top:471.00px;font-size:14.2px;color:#111;transform:scaleX(0.9443);transform-origin:0 0;">Wednesday</span>
<span class="t" style="left:26.10px;top:491.00px;font-size:14.2px;color:#111;transform:scaleX(0.9609);transform-origin:0 0;">Thursday</span>
<span class="t" style="left:26.10px;top:511.00px;font-size:14.2px;color:#111;transform:scaleX(0.9601);transform-origin:0 0;">Friday</span>
<span class="t" style="left:26.10px;top:531.00px;font-size:14.2px;color:#111;transform:scaleX(0.9478);transform-origin:0 0;">Saturday</span>
<span class="t" style="left:26.10px;top:551.00px;font-size:14.2px;color:#111;transform:scaleX(0.9327);transform-origin:0 0;">Sunday</span>
</body>
</html>
